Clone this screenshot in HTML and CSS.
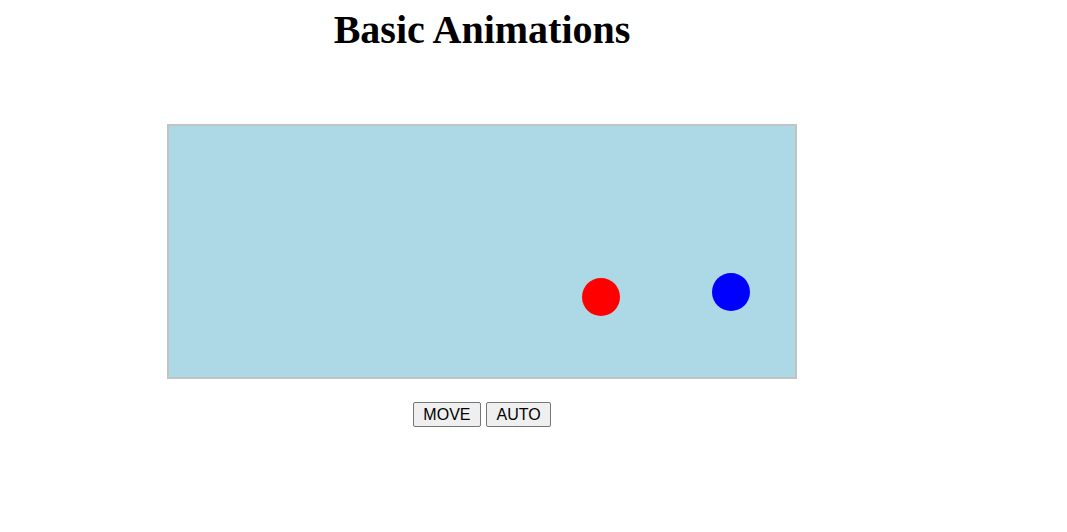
FILE: index.html
```html
<!DOCTYPE html>
<html>
<head>
<meta charset="utf-8">
<title>Basic Animations</title>
<link rel="stylesheet" href="styles.css">
</head>
<body>
<div class="wrap">
  <h1 class="title">Basic Animations</h1>
  <div class="stage">
    <div class="ball red"></div>
    <div class="ball blue"></div>
  </div>
  <div class="controls">
    <button class="btn">MOVE</button>
    <button class="btn">AUTO</button>
  </div>
</div>
</body>
</html>
```

FILE: styles.css
```css
html, body {
  margin: 0;
  padding: 0;
  background: #ffffff;
}
body {
  font-family: "Liberation Serif", "Times New Roman", serif;
}
.wrap {
  width: 948px;
  margin-left: 8px;
  display: flex;
  flex-direction: column;
  align-items: center;
}
.title {
  font-family: "Liberation Serif", "Times New Roman", serif;
  font-weight: bold;
  font-size: 40px;
  margin: 6px 0 0 0;
  color: #000;
}
.stage {
  position: relative;
  box-sizing: border-box;
  width: 630px;
  height: 255px;
  margin-top: 71px;
  background: #add8e6;
  border: 2px solid #c3c3c3;
}
.ball {
  position: absolute;
  width: 38px;
  height: 38px;
  border-radius: 50%;
}
.red {
  background: #ff0000;
  left: 413px;
  top: 152px;
}
.blue {
  background: #0000ff;
  left: 543px;
  top: 147px;
}
.controls {
  display: flex;
  gap: 5px;
  margin-top: 23px;
}
.btn {
  font-family: "Liberation Sans", Arial, sans-serif;
  font-size: 16px;
  padding: 1px 9.5px;
  height: 25px;
  line-height: 18px;
  color: #000;
  background: #efefef;
  border: 1px solid #767676;
  border-radius: 2px;
}
```
